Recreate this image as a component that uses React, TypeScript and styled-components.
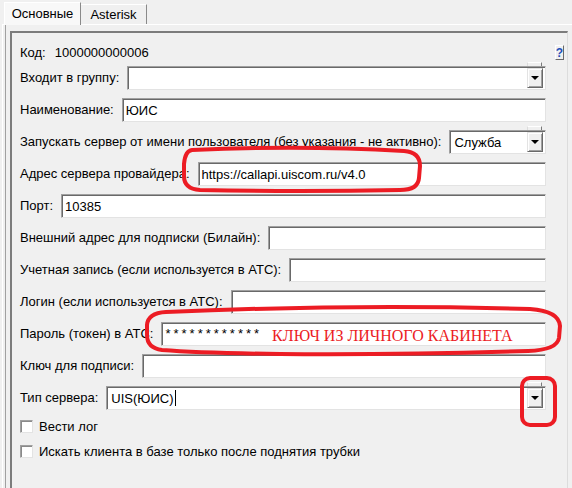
import styled, { createGlobalStyle } from "styled-components";

const GlobalStyle = createGlobalStyle`
  html, body {
    margin: 0;
    padding: 0;
    background: #f0f0f0;
  }
  body {
    font-family: "Liberation Sans", Arial, sans-serif;
    font-size: 13px;
    color: #000;
  }
`;

const RED = "#ec1c24";

interface FieldDef {
  label: string;
  value?: string;
  kind?: "input" | "combo";
}

const fields: FieldDef[] = [
  { label: "Входит в группу:", kind: "combo" },
  { label: "Наименование:", value: "ЮИС" },
  { label: "Запускать сервер от имени пользователя (без указания - не активно):", value: "Служба", kind: "combo" },
  { label: "Адрес сервера провайдера:", value: "https://callapi.uiscom.ru/v4.0" },
  { label: "Порт:", value: "10385" },
  { label: "Внешний адрес для подписки (Билайн):" },
  { label: "Учетная запись (если используется в АТС):" },
  { label: "Логин (если используется в АТС):" },
];

const App = () => {
  return (
    <>
      <GlobalStyle />
      <Window>
        <TabStrip>
          <Tab $active>Основные</Tab>
          <Tab>Asterisk</Tab>
        </TabStrip>
        <TabPage>
          <Frame>
            <CodeRow>
              <span>Код:</span>
              <CodeValue>1000000000006</CodeValue>
              <HelpButton>?</HelpButton>
            </CodeRow>
            <Fields>
              {fields.map((f) => (
                <Row key={f.label}>
                  <Label>{f.label}</Label>
                  {f.kind === "combo" ? (
                    <Combo $narrow={!!f.value}>
                      <ComboText>{f.value}</ComboText>
                      <DropButton>
                        <Caret />
                      </DropButton>
                    </Combo>
                  ) : (
                    <Input>{f.value}</Input>
                  )}
                </Row>
              ))}
              <Row>
                <Label>Пароль (токен) в АТС:</Label>
                <Input>
                  <Stars>************</Stars>
                  <RedNote>КЛЮЧ ИЗ ЛИЧНОГО КАБИНЕТА</RedNote>
                </Input>
              </Row>
              <Row>
                <Label>Ключ для подписи:</Label>
                <Input />
              </Row>
              <Row>
                <Label>Тип сервера:</Label>
                <Combo>
                  <ComboText>
                    UIS(ЮИС)
                    <TextCursor />
                  </ComboText>
                  <DropButton>
                    <Caret />
                  </DropButton>
                </Combo>
              </Row>
            </Fields>
            <Checks>
              <CheckRow>
                <CheckBox />
                <span>Вести лог</span>
              </CheckRow>
              <CheckRow>
                <CheckBox />
                <span>Искать клиента в базе только после поднятия трубки</span>
              </CheckRow>
            </Checks>
          </Frame>
        </TabPage>
        <Marks viewBox="0 0 572 488" width="572" height="488">
          <path
            d="M 192 150 Q 300 145 404 151 Q 420 152 420 166 L 419 178 Q 418 190 400 190 Q 300 192 200 190 Q 184 189 184 176 L 184 164 Q 185 151 192 150 Z"
            fill="none"
            stroke={RED}
            strokeWidth="4"
          />
          <path
            d="M 166 312 Q 350 304 530 309 Q 559 311 560 326 L 559 338 Q 557 350 528 351 Q 400 355 280 354 Q 200 353 162 350 Q 147 348 147 335 L 147 325 Q 148 313 166 312 Z"
            fill="none"
            stroke={RED}
            strokeWidth="4"
          />
          <rect x="522" y="378" width="33" height="47" rx="8" fill="none" stroke={RED} strokeWidth="4" />
        </Marks>
      </Window>
    </>
  );
};

const Window = styled.div`
  position: relative;
  width: 572px;
  height: 488px;
  overflow: hidden;
  background: #f0f0f0;
`;

const TabStrip = styled.div`
  display: flex;
  align-items: flex-end;
  height: 24px;
  padding-left: 4px;
`;

const Tab = styled.div<{ $active?: boolean }>`
  box-sizing: border-box;
  height: ${(p) => (p.$active ? "23px" : "20px")};
  margin-bottom: ${(p) => (p.$active ? "-1px" : "0")};
  width: ${(p) => (p.$active ? "77px" : "66px")};
  display: flex;
  align-items: center;
  justify-content: center;
  background: ${(p) => (p.$active ? "#f8f8f8" : "#f0f0f0")};
  border-top: 1px solid #ffffff;
  border-left: ${(p) => (p.$active ? "1px solid #ffffff" : "none")};
  border-right: 1px solid #8a8a8a;
  position: relative;
  z-index: ${(p) => (p.$active ? 1 : 0)};
  padding-bottom: ${(p) => (p.$active ? "1px" : "0")};
`;

const TabPage = styled.div`
  margin-left: 2px;
  height: 464px;
  border-left: 1px solid #ffffff;
  border-top: 1px solid #ffffff;
  box-shadow: inset 2px 0 0 #f0f0f0, inset 3px 0 0 #a0a0a0;
  padding: 6px 0 0 7px;
`;

const Frame = styled.div`
  box-sizing: border-box;
  width: 558px;
  height: 470px;
  border-top: 2px solid #7c7c7c;
  border-left: 2px solid #7c7c7c;
  border-right: 1px solid #dcdcdc;
  padding-left: 8px;
`;

const CodeRow = styled.div`
  display: flex;
  align-items: center;
  height: 22px;
  margin-top: 8px;
  padding-right: 3px;
`;

const CodeValue = styled.span`
  margin-left: 9px;
  flex: 1;
`;

const HelpButton = styled.div`
  box-sizing: border-box;
  width: 9px;
  height: 15px;
  margin-top: 1px;
  display: flex;
  align-items: center;
  justify-content: center;
  border-top: 1px solid #ffffff;
  border-left: 1px solid #ffffff;
  border-right: 1px solid #6a6a6a;
  border-bottom: 1px solid #6a6a6a;
  font-size: 12px;
  font-weight: bold;
  color: #1f4fb8;
  line-height: 1;
`;

const Fields = styled.div`
  display: flex;
  flex-direction: column;
  gap: 8px;
  margin-top: 3px;
  padding-right: 21px;
`;

const Row = styled.div`
  display: flex;
  align-items: center;
  gap: 8px;
  height: 24px;
`;

const Label = styled.span`
  white-space: nowrap;
  margin-top: -2px;
`;

const sunken = `
  box-sizing: border-box;
  height: 24px;
  background: #ffffff;
  border-top: 1px solid #a0a0a0;
  border-left: 1px solid #a0a0a0;
  border-right: 1px solid #e3e3e3;
  border-bottom: 1px solid #e3e3e3;
  box-shadow: inset 1px 1px 0 #696969;
`;

const Input = styled.div`
  ${sunken}
  flex: 1;
  display: flex;
  align-items: center;
  padding-left: 3px;
  white-space: nowrap;
  overflow: hidden;
`;

const Stars = styled.span`
  align-self: flex-start;
  margin-top: 3px;
  letter-spacing: 3px;
`;

const RedNote = styled.span`
  font-family: "Liberation Serif", "Times New Roman", serif;
  font-size: 16px;
  color: ${RED};
  margin-left: 10px;
  margin-top: 4px;
`;

const Combo = styled.div<{ $narrow?: boolean }>`
  ${sunken}
  position: relative;
  flex: ${(p) => (p.$narrow ? "0 0 97px" : "1")};
  display: flex;
  align-items: center;
  padding: 2px 2px 2px 4px;

  &::before {
    content: "";
    position: absolute;
    top: -5px;
    right: 3px;
    width: 13px;
    height: 3px;
    background: #f0f0f0;
    border-top: 1px solid #ffffff;
    border-right: 1px solid #7a7a7a;
    border-left: 1px solid #dcdcdc;
  }
`;

const ComboText = styled.span`
  flex: 1;
  display: flex;
  align-items: center;
  white-space: nowrap;
`;

const TextCursor = styled.span`
  display: inline-block;
  width: 1px;
  height: 16px;
  background: #000;
  margin-left: 1px;
`;

const DropButton = styled.div`
  box-sizing: border-box;
  width: 16px;
  height: 20px;
  display: flex;
  align-items: center;
  justify-content: center;
  background: #f0f0f0;
  border-top: 1px solid #e3e3e3;
  border-left: 1px solid #e3e3e3;
  border-right: 1px solid #696969;
  border-bottom: 1px solid #696969;
  box-shadow: inset 1px 1px 0 #ffffff, inset -1px -1px 0 #a0a0a0;
`;

const Caret = styled.span`
  width: 0;
  height: 0;
  border-left: 4px solid transparent;
  border-right: 4px solid transparent;
  border-top: 4px solid #000;
`;

const Checks = styled.div`
  display: flex;
  flex-direction: column;
  gap: 12px;
  margin-top: 10px;
`;

const CheckRow = styled.label`
  display: flex;
  align-items: center;
  gap: 6px;
  height: 13px;
`;

const CheckBox = styled.span`
  box-sizing: border-box;
  width: 13px;
  height: 13px;
  background: #ffffff;
  border-top: 1px solid #a0a0a0;
  border-left: 1px solid #a0a0a0;
  border-right: 1px solid #e3e3e3;
  border-bottom: 1px solid #e3e3e3;
  box-shadow: inset 1px 1px 0 #8a8a8a;
`;

const Marks = styled.svg`
  position: absolute;
  top: 0;
  left: 0;
  pointer-events: none;
`;

export default App;
